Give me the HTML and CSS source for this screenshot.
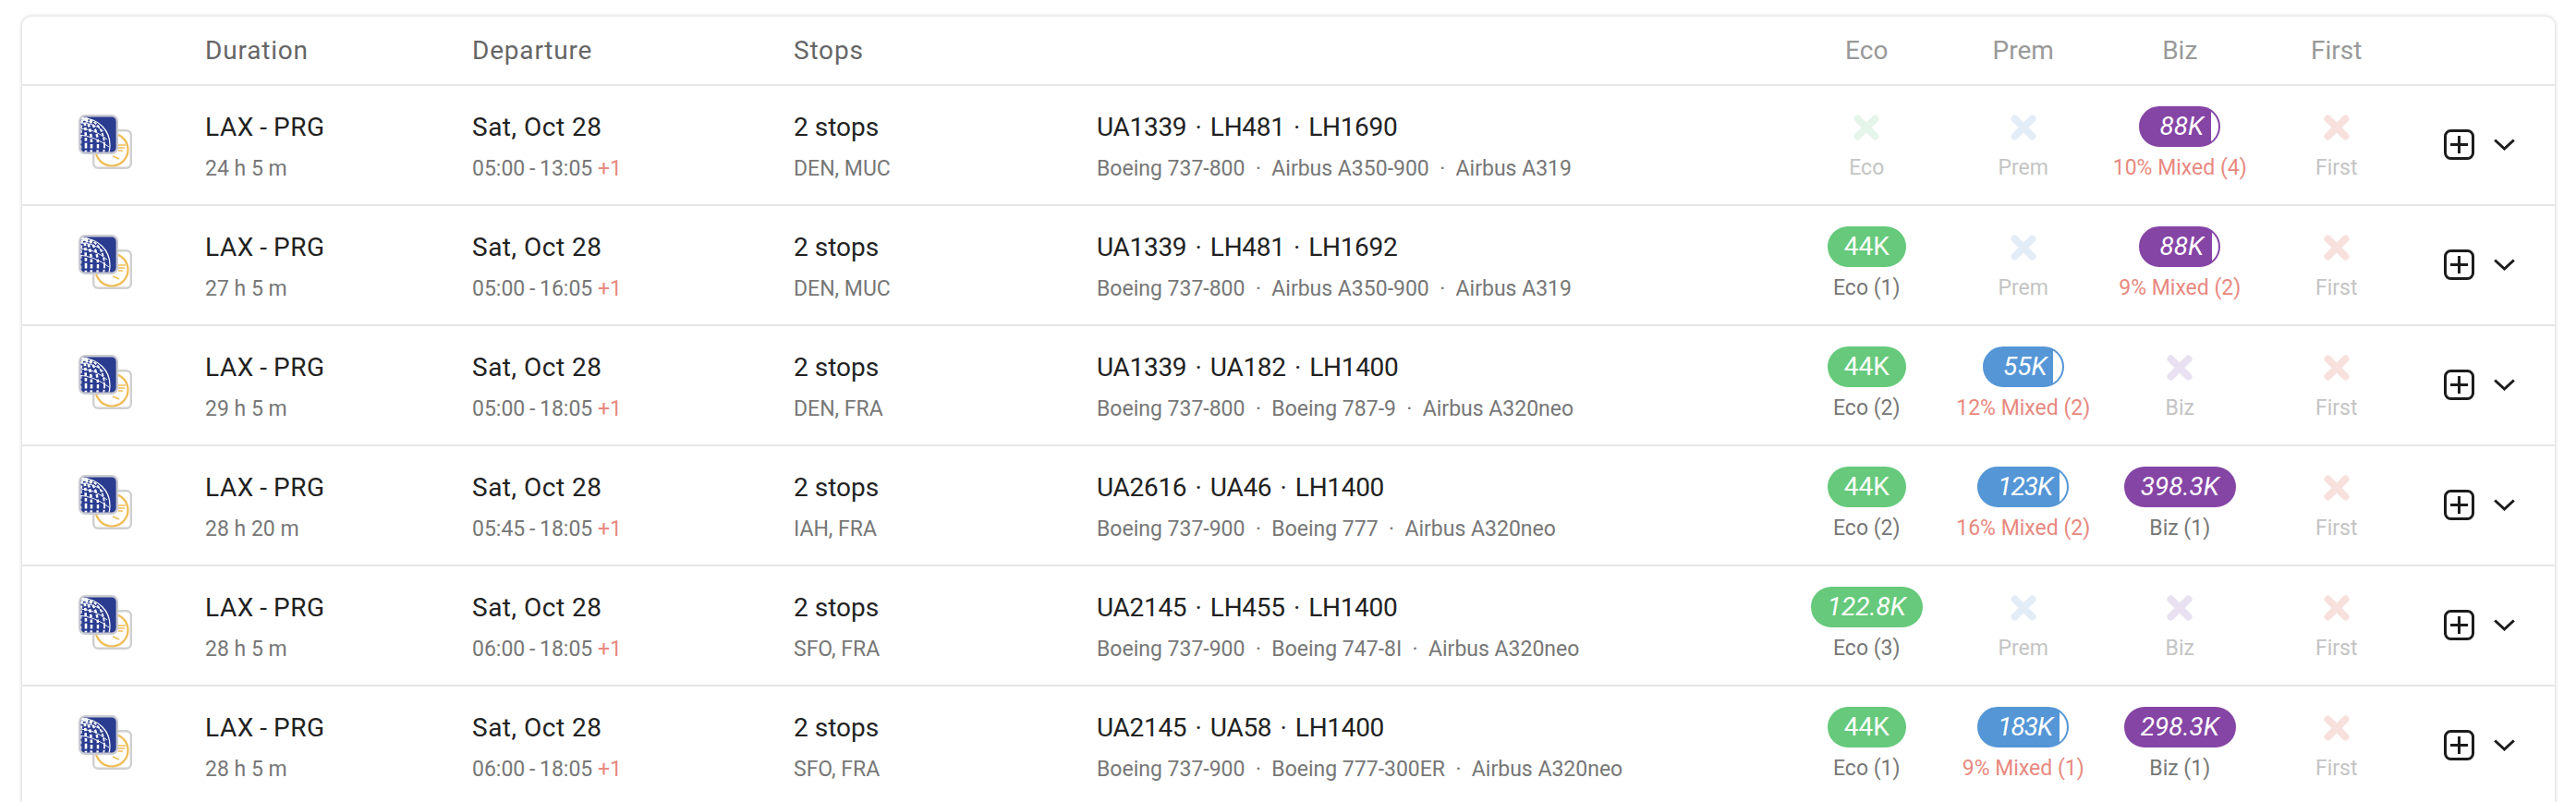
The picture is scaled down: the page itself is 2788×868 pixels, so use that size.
FILE: index.html
```html
<!DOCTYPE html>
<html lang="en">
<head>
  <meta charset="UTF-8" />
  <title>Flight results</title>
  <link rel="stylesheet" href="styles.css">
</head>
<body>
  <svg class="defs" width="0" height="0">
    <symbol id="united" viewBox="0 0 43 43">
      <clipPath id="globe-clip"><rect x="2.400" y="2.400" width="38.200" height="38.200" rx="5" /></clipPath>
      <rect x="1.200" y="1.200" width="40.600" height="40.600" rx="6" fill="#2a3c8f" stroke="#c9cad2" stroke-width="2.400" />
      <g clip-path="url(#globe-clip)" fill="none" stroke="#fff">
        <circle cx="5" cy="33" r="29" stroke-width="1.200" />
        <ellipse cx="5" cy="33" rx="23" ry="29" stroke-width="1.800" stroke-dasharray="3.500 1.500" />
        <ellipse cx="5" cy="33" rx="16" ry="29" stroke-width="2.400" stroke-dasharray="3.500 2" />
        <ellipse cx="5" cy="33" rx="9" ry="29" stroke-width="2.600" stroke-dasharray="3.500 2" />
        <ellipse cx="5" cy="33" rx="3" ry="29" stroke-width="2.600" stroke-dasharray="3.500 2" />
        <path d="M0 9q16-1 27 9M0 15q17 0 31 12M0 22q17 1 33 13" stroke-width="0.900" />
      </g>
    </symbol>
    <symbol id="lufthansa" viewBox="0 0 43 43">
      <rect x="1.200" y="1.200" width="40.600" height="40.600" rx="5" fill="#fff" stroke="#d0d0d0" stroke-width="2.400" />
      <circle cx="21" cy="22" r="17.500" fill="#fff" stroke="#efbc55" stroke-width="2.200" />
      <path d="M24 17h12M26 20h9M28 23h5M22 29l7 3" fill="none" stroke="#efbc55" stroke-width="1.400" />
    </symbol>
    <symbol id="cross" viewBox="0 0 28 28">
      <path d="M4.500 4.500L23.500 23.500M23.500 4.500L4.500 23.500" fill="none" stroke="currentColor" stroke-width="8" stroke-linecap="round" />
    </symbol>
    <symbol id="plus" viewBox="0 0 33 33">
      <rect x="1.500" y="1.500" width="30" height="30" rx="6" fill="none" stroke="#1c1c1c" stroke-width="3" />
      <path d="M16.500 7v19M7 16.500h19" fill="none" stroke="#1c1c1c" stroke-width="3" />
    </symbol>
    <symbol id="chevron" viewBox="0 0 23 13">
      <path d="M1.200 1.500L11.500 11L21.800 1.500" fill="none" stroke="#1c1c1c" stroke-width="3" />
    </symbol>
  </svg>

  <div class="card">
    <div class="row head">
      <div></div>
      <div>Duration</div>
      <div>Departure</div>
      <div>Stops</div>
      <div></div>
      <div class="cabin">Eco</div>
      <div class="cabin">Prem</div>
      <div class="cabin">Biz</div>
      <div class="cabin">First</div>
      <div></div>
    </div>

    <div class="row">
      <div class="logos"><svg class="logo-b"><use href="#lufthansa" /></svg><svg class="logo-a"><use href="#united" /></svg></div>
      <div><div class="main route">LAX&thinsp;-&thinsp;PRG</div><div class="sub">24 h 5 m</div></div>
      <div><div class="main date">Sat, Oct 28</div><div class="sub">05:00&thinsp;-&thinsp;13:05 <span class="plus-day">+1</span></div></div>
      <div><div class="main">2 stops</div><div class="sub">DEN, MUC</div></div>
      <div><div class="main flights">UA1339 &nbsp;·&nbsp; LH481 &nbsp;·&nbsp; LH1690</div><div class="sub">Boeing 737-800 &nbsp;·&nbsp; Airbus A350-900 &nbsp;·&nbsp; Airbus A319</div></div>
      <div class="fare"><svg class="cross eco"><use href="#cross" /></svg><div class="tag none">Eco</div></div>
      <div class="fare"><svg class="cross prem"><use href="#cross" /></svg><div class="tag none">Prem</div></div>
      <div class="fare"><div class="pill biz mixed dyn">88K<span class="sliver" style="width:10%"></span></div><div class="tag warn">10% Mixed (4)</div></div>
      <div class="fare"><svg class="cross first"><use href="#cross" /></svg><div class="tag none">First</div></div>
      <div class="actions"><svg class="plus"><use href="#plus" /></svg><svg class="chevron"><use href="#chevron" /></svg></div>
    </div>

    <div class="row">
      <div class="logos"><svg class="logo-b"><use href="#lufthansa" /></svg><svg class="logo-a"><use href="#united" /></svg></div>
      <div><div class="main route">LAX&thinsp;-&thinsp;PRG</div><div class="sub">27 h 5 m</div></div>
      <div><div class="main date">Sat, Oct 28</div><div class="sub">05:00&thinsp;-&thinsp;16:05 <span class="plus-day">+1</span></div></div>
      <div><div class="main">2 stops</div><div class="sub">DEN, MUC</div></div>
      <div><div class="main flights">UA1339 &nbsp;·&nbsp; LH481 &nbsp;·&nbsp; LH1692</div><div class="sub">Boeing 737-800 &nbsp;·&nbsp; Airbus A350-900 &nbsp;·&nbsp; Airbus A319</div></div>
      <div class="fare"><div class="pill eco">44K</div><div class="tag">Eco (1)</div></div>
      <div class="fare"><svg class="cross prem"><use href="#cross" /></svg><div class="tag none">Prem</div></div>
      <div class="fare"><div class="pill biz mixed dyn">88K<span class="sliver" style="width:9%"></span></div><div class="tag warn">9% Mixed (2)</div></div>
      <div class="fare"><svg class="cross first"><use href="#cross" /></svg><div class="tag none">First</div></div>
      <div class="actions"><svg class="plus"><use href="#plus" /></svg><svg class="chevron"><use href="#chevron" /></svg></div>
    </div>

    <div class="row">
      <div class="logos"><svg class="logo-b"><use href="#lufthansa" /></svg><svg class="logo-a"><use href="#united" /></svg></div>
      <div><div class="main route">LAX&thinsp;-&thinsp;PRG</div><div class="sub">29 h 5 m</div></div>
      <div><div class="main date">Sat, Oct 28</div><div class="sub">05:00&thinsp;-&thinsp;18:05 <span class="plus-day">+1</span></div></div>
      <div><div class="main">2 stops</div><div class="sub">DEN, FRA</div></div>
      <div><div class="main flights">UA1339 &nbsp;·&nbsp; UA182 &nbsp;·&nbsp; LH1400</div><div class="sub">Boeing 737-800 &nbsp;·&nbsp; Boeing 787-9 &nbsp;·&nbsp; Airbus A320neo</div></div>
      <div class="fare"><div class="pill eco">44K</div><div class="tag">Eco (2)</div></div>
      <div class="fare"><div class="pill prem mixed dyn">55K<span class="sliver" style="width:12%"></span></div><div class="tag warn">12% Mixed (2)</div></div>
      <div class="fare"><svg class="cross biz"><use href="#cross" /></svg><div class="tag none">Biz</div></div>
      <div class="fare"><svg class="cross first"><use href="#cross" /></svg><div class="tag none">First</div></div>
      <div class="actions"><svg class="plus"><use href="#plus" /></svg><svg class="chevron"><use href="#chevron" /></svg></div>
    </div>

    <div class="row">
      <div class="logos"><svg class="logo-b"><use href="#lufthansa" /></svg><svg class="logo-a"><use href="#united" /></svg></div>
      <div><div class="main route">LAX&thinsp;-&thinsp;PRG</div><div class="sub">28 h 20 m</div></div>
      <div><div class="main date">Sat, Oct 28</div><div class="sub">05:45&thinsp;-&thinsp;18:05 <span class="plus-day">+1</span></div></div>
      <div><div class="main">2 stops</div><div class="sub">IAH, FRA</div></div>
      <div><div class="main flights">UA2616 &nbsp;·&nbsp; UA46 &nbsp;·&nbsp; LH1400</div><div class="sub">Boeing 737-900 &nbsp;·&nbsp; Boeing 777 &nbsp;·&nbsp; Airbus A320neo</div></div>
      <div class="fare"><div class="pill eco">44K</div><div class="tag">Eco (2)</div></div>
      <div class="fare"><div class="pill prem mixed dyn narrow">123K<span class="sliver" style="width:9%"></span></div><div class="tag warn">16% Mixed (2)</div></div>
      <div class="fare"><div class="pill biz dyn">398.3K</div><div class="tag">Biz (1)</div></div>
      <div class="fare"><svg class="cross first"><use href="#cross" /></svg><div class="tag none">First</div></div>
      <div class="actions"><svg class="plus"><use href="#plus" /></svg><svg class="chevron"><use href="#chevron" /></svg></div>
    </div>

    <div class="row">
      <div class="logos"><svg class="logo-b"><use href="#lufthansa" /></svg><svg class="logo-a"><use href="#united" /></svg></div>
      <div><div class="main route">LAX&thinsp;-&thinsp;PRG</div><div class="sub">28 h 5 m</div></div>
      <div><div class="main date">Sat, Oct 28</div><div class="sub">06:00&thinsp;-&thinsp;18:05 <span class="plus-day">+1</span></div></div>
      <div><div class="main">2 stops</div><div class="sub">SFO, FRA</div></div>
      <div><div class="main flights">UA2145 &nbsp;·&nbsp; LH455 &nbsp;·&nbsp; LH1400</div><div class="sub">Boeing 737-900 &nbsp;·&nbsp; Boeing 747-8I &nbsp;·&nbsp; Airbus A320neo</div></div>
      <div class="fare"><div class="pill eco dyn">122.8K</div><div class="tag">Eco (3)</div></div>
      <div class="fare"><svg class="cross prem"><use href="#cross" /></svg><div class="tag none">Prem</div></div>
      <div class="fare"><svg class="cross biz"><use href="#cross" /></svg><div class="tag none">Biz</div></div>
      <div class="fare"><svg class="cross first"><use href="#cross" /></svg><div class="tag none">First</div></div>
      <div class="actions"><svg class="plus"><use href="#plus" /></svg><svg class="chevron"><use href="#chevron" /></svg></div>
    </div>

    <div class="row">
      <div class="logos"><svg class="logo-b"><use href="#lufthansa" /></svg><svg class="logo-a"><use href="#united" /></svg></div>
      <div><div class="main route">LAX&thinsp;-&thinsp;PRG</div><div class="sub">28 h 5 m</div></div>
      <div><div class="main date">Sat, Oct 28</div><div class="sub">06:00&thinsp;-&thinsp;18:05 <span class="plus-day">+1</span></div></div>
      <div><div class="main">2 stops</div><div class="sub">SFO, FRA</div></div>
      <div><div class="main flights">UA2145 &nbsp;·&nbsp; UA58 &nbsp;·&nbsp; LH1400</div><div class="sub">Boeing 737-900 &nbsp;·&nbsp; Boeing 777-300ER &nbsp;·&nbsp; Airbus A320neo</div></div>
      <div class="fare"><div class="pill eco">44K</div><div class="tag">Eco (1)</div></div>
      <div class="fare"><div class="pill prem mixed dyn narrow">183K<span class="sliver" style="width:9%"></span></div><div class="tag warn">9% Mixed (1)</div></div>
      <div class="fare"><div class="pill biz dyn">298.3K</div><div class="tag">Biz (1)</div></div>
      <div class="fare"><svg class="cross first"><use href="#cross" /></svg><div class="tag none">First</div></div>
      <div class="actions"><svg class="plus"><use href="#plus" /></svg><svg class="chevron"><use href="#chevron" /></svg></div>
    </div>
  </div>
</body>
</html>
```
FILE: styles.css
```css
* {
  box-sizing: border-box;
  margin: 0;
  padding: 0;
}

html, body {
  height: 100%;
  overflow: hidden;
}

body {
  font-family: 'Roboto', sans-serif;
  background: #fff;
  color: #222;
  padding: 18px 23px 0 24px;
}

.defs {
  position: absolute;
}

.card {
  background: #fff;
  border-radius: 10px 10px 0 0;
  box-shadow: 0 0 5px rgba(0, 0, 0, 0.22);
}

.row {
  display: grid;
  grid-template-columns: 198px 289px 348px 328px 748.5px repeat(4, 169.5px) 1fr;
  height: 130px;
  padding-top: 22px;
  border-bottom: 2px solid #e6e6e6;
}

.head {
  height: 75px;
  padding-top: 0;
  align-items: center;
  font-size: 28px;
  letter-spacing: 0.8px;
  color: #666;
}

.cabin {
  text-align: center;
  letter-spacing: 0;
  color: #999;
}

.main {
  font-size: 28px;
  line-height: 46px;
  color: #222;
}

.route {
  letter-spacing: 0.6px;
}

.date {
  letter-spacing: 0.5px;
}

.flights {
  letter-spacing: -0.3px;
  word-spacing: -2px;
}

.sub {
  font-size: 23px;
  line-height: 43px;
  color: #777;
}

.plus-day {
  color: #e8897f;
}

.logos {
  position: relative;
}

.logos svg {
  position: absolute;
  width: 43px;
  height: 43px;
}

.logo-a {
  left: 61px;
  top: 9px;
}

.logo-b {
  left: 76px;
  top: 25px;
}

.fare {
  display: flex;
  flex-direction: column;
  align-items: center;
}

.pill {
  position: relative;
  overflow: hidden;
  height: 44px;
  padding: 0 18px;
  border-radius: 22px;
  color: #fff;
  font-size: 28px;
  line-height: 44px;
}

.pill.dyn {
  font-style: italic;
}

.pill.mixed {
  padding: 0 16px 0 20px;
  border: 2px solid;
  line-height: 40px;
}

.pill.narrow {
  letter-spacing: -1px;
}

.pill.eco {
  background: #66c97b;
}

.pill.prem {
  background: #5596d6;
  border-color: #5596d6;
}

.pill.biz {
  background: #8545a5;
  border-color: #8545a5;
}

.sliver {
  position: absolute;
  top: 0;
  right: 0;
  bottom: 0;
  background: #fff;
}

.cross {
  width: 28px;
  height: 28px;
  margin: 9px 0 7px;
}

.cross.eco {
  color: #e6f5ea;
}

.cross.prem {
  color: #e3edf7;
}

.cross.biz {
  color: #e9e0f1;
}

.cross.first {
  color: #f8e0dd;
}

.tag {
  font-size: 23px;
  line-height: 46px;
  color: #777;
}

.tag.none {
  color: #c4c4c4;
}

.tag.warn {
  color: #e8897f;
}

.actions {
  display: flex;
  align-items: center;
  padding: 25px 0 0 31px;
  height: 33px;
  box-sizing: content-box;
}

.plus {
  width: 33px;
  height: 33px;
}

.chevron {
  width: 23px;
  height: 13px;
  margin-left: 21px;
}
```
